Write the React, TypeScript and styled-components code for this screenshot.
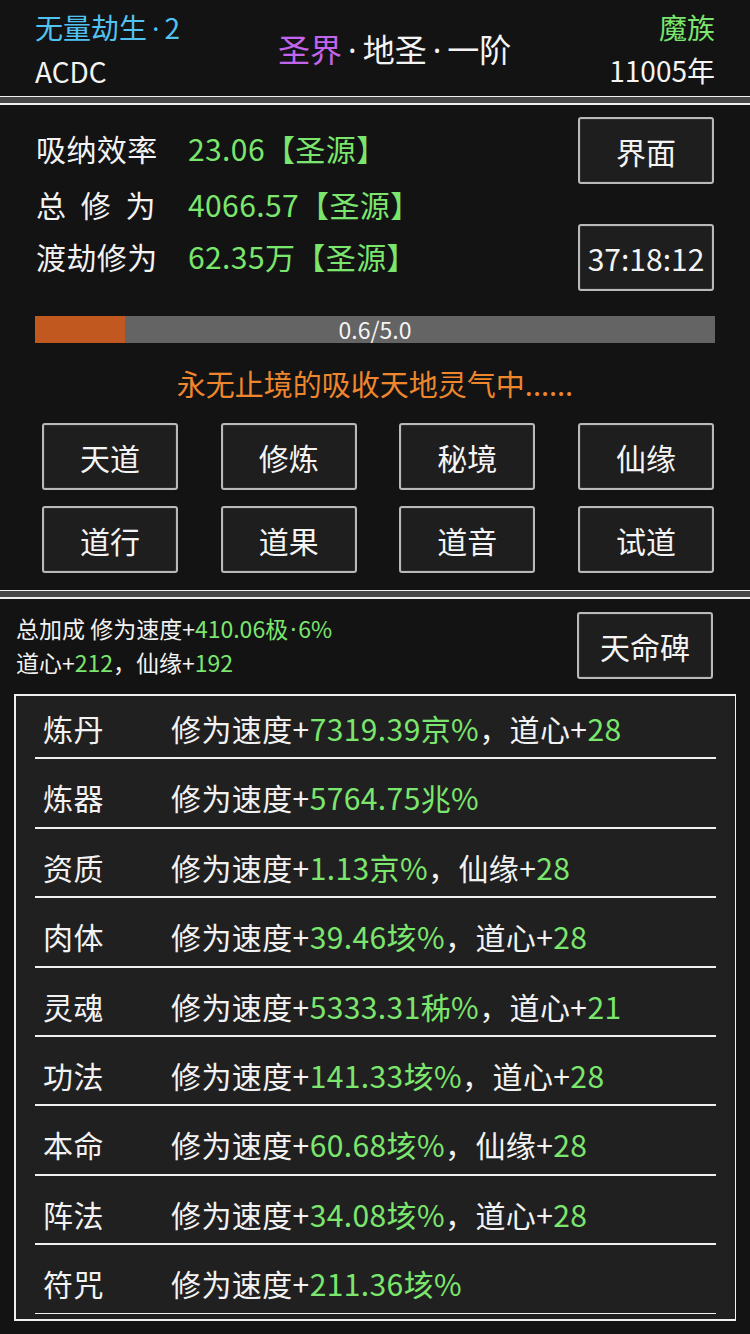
import React from "react"
import styled, { createGlobalStyle } from "styled-components"

const GlobalStyle = createGlobalStyle`
  html, body {
    margin: 0;
    padding: 0;
    background: #131313;
  }
  body {
    font-family: "Noto Sans CJK SC", "Noto Sans", sans-serif;
    color: #f2f2f2;
  }
`

const GREEN = "#7be66d"

type Bonus = { name: string; parts: [string, string][] }

const bonuses: Bonus[] = [
  { name: "炼丹", parts: [["修为速度+", "7319.39京%"], ["，道心+", "28"]] },
  { name: "炼器", parts: [["修为速度+", "5764.75兆%"]] },
  { name: "资质", parts: [["修为速度+", "1.13京%"], ["，仙缘+", "28"]] },
  { name: "肉体", parts: [["修为速度+", "39.46垓%"], ["，道心+", "28"]] },
  { name: "灵魂", parts: [["修为速度+", "5333.31秭%"], ["，道心+", "21"]] },
  { name: "功法", parts: [["修为速度+", "141.33垓%"], ["，道心+", "28"]] },
  { name: "本命", parts: [["修为速度+", "60.68垓%"], ["，仙缘+", "28"]] },
  { name: "阵法", parts: [["修为速度+", "34.08垓%"], ["，道心+", "28"]] },
  { name: "符咒", parts: [["修为速度+", "211.36垓%"]] },
]

const menu = ["天道", "修炼", "秘境", "仙缘", "道行", "道果", "道音", "试道"]

const App = () => {
  return (
    <Page>
      <GlobalStyle />

      {/* header */}
      <Header>
        <Side>
          <Line color="#52c2f2">
            无量劫生<Dot space={5}>·</Dot>2
          </Line>
          <Line>ACDC</Line>
        </Side>
        <Title>
          <Purple>圣界</Purple>
          <Dot space={6}>·</Dot>地圣<Dot space={6}>·</Dot>一阶
        </Title>
        <Side align="right">
          <Line color={GREEN}>魔族</Line>
          <Line>11005年</Line>
        </Side>
      </Header>

      <Divider />

      {/* cultivation panel */}
      <Panel>
        <TopRow>
          <Stats>
            <Stat>
              <StatLabel>吸纳效率</StatLabel>
              <Green>23.06【圣源】</Green>
            </Stat>
            <Stat offset={4}>
              <StatLabel spread>
                <span>总</span>
                <span>修</span>
                <span>为</span>
              </StatLabel>
              <Green>4066.57【圣源】</Green>
            </Stat>
            <Stat>
              <StatLabel>渡劫修为</StatLabel>
              <Green>62.35万【圣源】</Green>
            </Stat>
          </Stats>
          <ButtonColumn>
            <Button>界面</Button>
            <Button>37:18:12</Button>
          </ButtonColumn>
        </TopRow>

        <Progress>
          <ProgressFill style={{ width: `${(0.6 / 5) * 110}%` }} />
          <ProgressText>0.6/5.0</ProgressText>
        </Progress>

        <Status>永无止境的吸收天地灵气中......</Status>

        <MenuGrid>
          {menu.map((m) => (
            <Button key={m}>{m}</Button>
          ))}
        </MenuGrid>
      </Panel>

      <Divider />

      {/* bonus panel */}
      <BonusPanel>
        <BonusTop>
          <Summary>
            <div>
              总加成 修为速度+
              <Green>
                410.06极<Dot space={2}>·</Dot>6%
              </Green>
            </div>
            <div>
              道心+<Green>212</Green>，仙缘+<Green>192</Green>
            </div>
          </Summary>
          <Button>天命碑</Button>
        </BonusTop>

        <Table>
          {bonuses.map((b, i) => (
            <BonusRow key={b.name} first={i === 0} last={i === bonuses.length - 1}>
              <BonusName>{b.name}</BonusName>
              <span>
                {b.parts.map(([label, value]) => (
                  <React.Fragment key={label}>
                    {label}
                    <Green>{value}</Green>
                  </React.Fragment>
                ))}
              </span>
            </BonusRow>
          ))}
        </Table>
      </BonusPanel>
    </Page>
  )
}

export default App

const Page = styled.div`
  width: 750px;
  min-height: 1334px;
  background: #131313;
  overflow: hidden;
`

const Header = styled.div`
  height: 96px;
  padding: 6px 35px 0;
  box-sizing: border-box;
  display: flex;
  align-items: flex-start;
  justify-content: space-between;
`

const Side = styled.div<{ align?: string }>`
  display: flex;
  flex-direction: column;
  text-align: ${({ align }) => align || "left"};
`

const Line = styled.div<{ color?: string }>`
  font-size: 28px;
  line-height: 43px;
  color: ${({ color }) => color || "#f4f4f4"};
`

const Dot = styled.span<{ space: number }>`
  font-family: "Noto Sans", sans-serif;
  margin: 0 ${({ space }) => space}px;
`

const Title = styled.div`
  font-size: 32px;
  line-height: 44px;
  margin-top: 20px;
  color: #f4f4f4;
`

const Purple = styled.span`
  color: #c264ec;
`

const Green = styled.span`
  color: ${GREEN};
`

const Divider = styled.div`
  height: 6px;
  background: #474747;
  border-top: 1px solid #f0f0f0;
  border-bottom: 2px solid #f0f0f0;
`

const Panel = styled.div`
  padding: 12px 36px 17px;
  display: flex;
  flex-direction: column;
`

const TopRow = styled.div`
  display: flex;
  justify-content: space-between;
  align-items: flex-start;
`

const Stats = styled.div`
  padding-top: 5px;
  display: flex;
  flex-direction: column;
`

const Stat = styled.div<{ offset?: number }>`
  display: flex;
  font-size: 30px;
  line-height: 52px;
  letter-spacing: 0.4px;
  margin-top: ${({ offset }) => offset || 0}px;
`

const StatLabel = styled.span<{ spread?: boolean }>`
  width: 152px;
  display: flex;
  justify-content: ${({ spread }) => (spread ? "space-between" : "flex-start")};
  padding-right: ${({ spread }) => (spread ? "32px" : "0")};
  box-sizing: border-box;
`

const ButtonColumn = styled.div`
  display: flex;
  flex-direction: column;
  gap: 40px;
`

const Button = styled.div`
  width: 136px;
  height: 67px;
  box-sizing: border-box;
  border: 2px solid #b9b9b9;
  border-radius: 3px;
  background: #1e1e1e;
  box-shadow: inset 0 0 0 1px #2c2c2c;
  display: flex;
  align-items: center;
  justify-content: center;
  font-size: 30px;
  color: #f4f4f4;
`

const Progress = styled.div`
  position: relative;
  margin: 25px -1px 0;
  height: 27px;
  background: #646464;
`

const ProgressFill = styled.div`
  height: 100%;
  background: #c0581f;
`

const ProgressText = styled.div`
  position: absolute;
  inset: 0;
  text-align: center;
  font-size: 23px;
  line-height: 27px;
  color: #f4f4f4;
`

const Status = styled.div`
  margin-top: 20px;
  text-align: center;
  font-size: 29px;
  line-height: 40px;
  color: #ef862d;
`

const MenuGrid = styled.div`
  margin: 20px 0 0 6px;
  display: grid;
  grid-template-columns: repeat(4, 136px);
  justify-content: space-between;
  row-gap: 16px;
`

const BonusPanel = styled.div`
  padding: 13px 14px 16px;
`

const BonusTop = styled.div`
  display: flex;
  justify-content: space-between;
  align-items: flex-start;
  padding-right: 23px;
  margin-bottom: 15px;
`

const Summary = styled.div`
  padding: 0 0 0 2px;
  font-size: 23px;
  line-height: 33px;
`

const Table = styled.div`
  border: 2px solid #f0f0f0;
  border-right-width: 1px;
  background: #202020;
  padding: 0 19px 5px;
`

const BonusRow = styled.div<{ first?: boolean; last?: boolean }>`
  display: flex;
  margin-top: ${({ first }) => (first ? 0 : 5)}px;
  padding: ${({ first }) => (first ? 4 : 5)}px 0 0 8px;
  height: 57.4px;
  line-height: 57.4px;
  font-size: 30px;
  letter-spacing: 0.4px;
  border-bottom: ${({ last }) => (last ? 1 : 2)}px solid #f0f0f0;
`

const BonusName = styled.span`
  width: 128px;
  flex-shrink: 0;
`
